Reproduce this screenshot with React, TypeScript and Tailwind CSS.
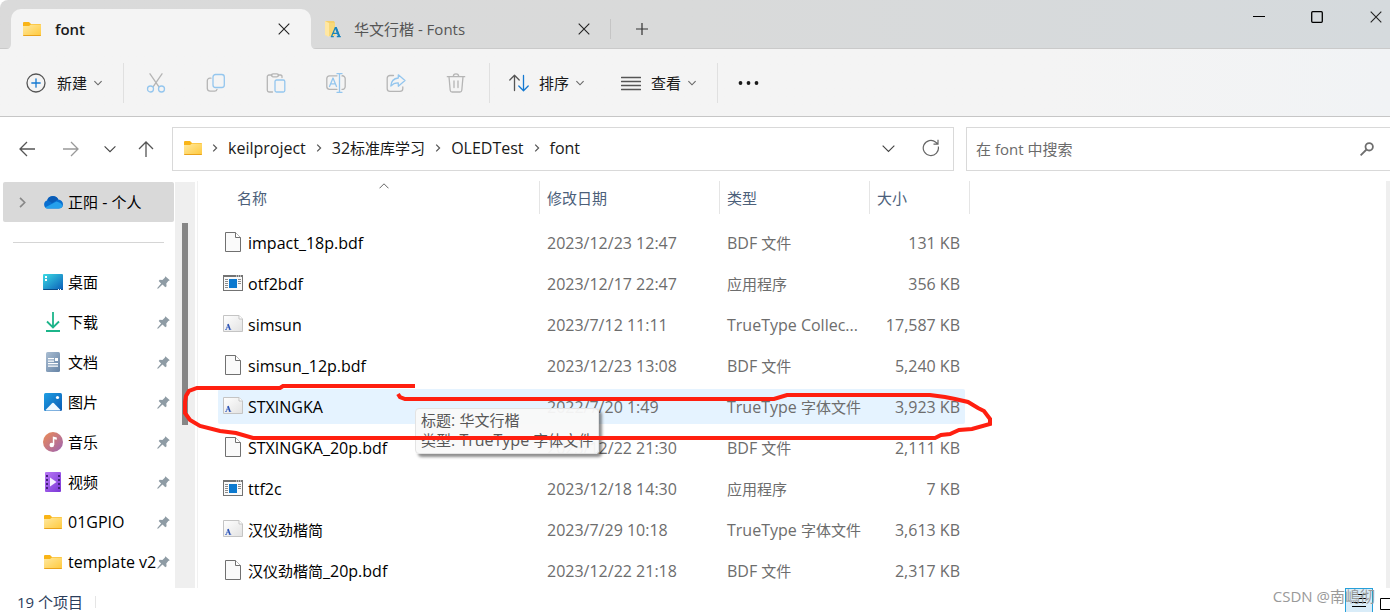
import type { ReactNode } from "react";

type FileKind = "blank" | "app" | "font";

const FILES: { name: string; kind: FileKind; date: string; type: string; size: string; hover?: boolean }[] = [
  { name: "impact_18p.bdf", kind: "blank", date: "2023/12/23 12:47", type: "BDF 文件", size: "131 KB" },
  { name: "otf2bdf", kind: "app", date: "2023/12/17 22:47", type: "应用程序", size: "356 KB" },
  { name: "simsun", kind: "font", date: "2023/7/12 11:11", type: "TrueType Collec...", size: "17,587 KB" },
  { name: "simsun_12p.bdf", kind: "blank", date: "2023/12/23 13:08", type: "BDF 文件", size: "5,240 KB" },
  { name: "STXINGKA", kind: "font", date: "2022/7/20 1:49", type: "TrueType 字体文件", size: "3,923 KB", hover: true },
  { name: "STXINGKA_20p.bdf", kind: "blank", date: "2023/12/22 21:30", type: "BDF 文件", size: "2,111 KB" },
  { name: "ttf2c", kind: "app", date: "2023/12/18 14:30", type: "应用程序", size: "7 KB" },
  { name: "汉仪劲楷简", kind: "font", date: "2023/7/29 10:18", type: "TrueType 字体文件", size: "3,613 KB" },
  { name: "汉仪劲楷简_20p.bdf", kind: "blank", date: "2023/12/22 21:18", type: "BDF 文件", size: "2,317 KB" },
];

const CRUMBS = ["keilproject", "32标准库学习", "OLEDTest", "font"];

// Latin runs are set one pixel larger than the Chinese ones
function Label({ text }: { text: string }) {
  const runs = text.split(/([\u4e00-\u9fff]+)/).filter(Boolean);
  return (
    <span className="text-[16px] leading-5 whitespace-nowrap">
      {runs.map((run, i) =>
        /[\u4e00-\u9fff]/.test(run) ? (
          <span key={i} className="text-[15px]">
            {run}
          </span>
        ) : (
          run
        ),
      )}
    </span>
  );
}

function FolderIcon() {
  return (
    <svg width="18" height="14" viewBox="0 0 18 14" className="shrink-0">
      <defs>
        <linearGradient id="folder" x1="0" y1="0" x2="1" y2="1">
          <stop offset="0" stopColor="#ffe9a0" />
          <stop offset="1" stopColor="#ffc93c" />
        </linearGradient>
      </defs>
      <path d="M0 1a1 1 0 0 1 1-1h5l2 2h9a1 1 0 0 1 1 1v3H0z" fill="#f9b416" />
      <path d="M0 4h6l2-1.5h10V13a1 1 0 0 1-1 1H1a1 1 0 0 1-1-1z" fill="url(#folder)" />
      <path d="M0 13h18a1 1 0 0 1-1 1H1a1 1 0 0 1-1-1z" fill="#e9a21b" />
    </svg>
  );
}

function FontsFolderIcon() {
  return (
    <svg width="18" height="18" viewBox="0 0 18 18" className="shrink-0">
      <path d="M1 1h9l1 2v13H3l-2-2z" fill="#f5d06a" />
      <path d="M1 1l4 2v14l-4-2z" fill="#ffe7a3" />
      <path d="M5 3h6v13H5z" fill="#f8d878" />
      <path
        d="M7.500 16.500l3.800-9h1l3.300 9M9 13.300h5M6.800 16.600h3M12.800 16.600h4"
        fill="none"
        stroke="#1a84bd"
        strokeWidth="1.200"
      />
      <path d="M11.600 7.500l3.500 9" stroke="#1a84bd" strokeWidth="2" />
    </svg>
  );
}

function CloseIcon() {
  return (
    <svg width="12" height="12" viewBox="0 0 12 12" fill="none" stroke="#222" strokeWidth="1.1">
      <path d="M.7.7l10.6 10.6M11.3.7L.7 11.3" />
    </svg>
  );
}

function ChevronDown({ size = 8, color = "#666" }: { size?: number; color?: string }) {
  return (
    <svg width={size} height={size} viewBox="0 0 8 8" fill="none" stroke={color} strokeWidth={9 / size} className="shrink-0">
      <path d="M.4 2.2L4 5.8l3.6-3.6" />
    </svg>
  );
}

function ChevronRight({ size = 8, color = "#555" }: { size?: number; color?: string }) {
  return (
    <svg width={size} height={size} viewBox="0 0 8 8" fill="none" stroke={color} strokeWidth="1.2" className="shrink-0">
      <path d="M2.2.6L5.6 4 2.2 7.4" />
    </svg>
  );
}

function ToolIcon({ children }: { children: ReactNode }) {
  return (
    <svg
      width="20"
      height="20"
      viewBox="0 0 20 20"
      fill="none"
      strokeWidth="1.3"
      strokeLinecap="round"
      strokeLinejoin="round"
      className="shrink-0"
    >
      {children}
    </svg>
  );
}

const ACTIONS = [
  {
    label: "剪切",
    icon: (
      <ToolIcon>
        <path d="M4 .8l8.6 12.6M16 .8L7.4 13.4" stroke="#b5b5b5" />
        <circle cx="4.500" cy="16" r="3" stroke="#94c6ee" />
        <circle cx="15.500" cy="16" r="3" stroke="#94c6ee" />
      </ToolIcon>
    ),
  },
  {
    label: "复制",
    icon: (
      <ToolIcon>
        <path d="M5 5.200H4A2.500 2.500 0 0 0 1.300 7.700V15.500A3 3 0 0 0 4.200 18.200H8.500A2.500 2.500 0 0 0 11 16.300" stroke="#b5b5b5" />
        <rect x="7" y="1.500" width="11.300" height="13" rx="2.500" stroke="#94c6ee" />
      </ToolIcon>
    ),
  },
  {
    label: "粘贴",
    icon: (
      <ToolIcon>
        <path d="M6 2H3A1.800 1.800 0 0 0 1.300 4V17.300A1.800 1.800 0 0 0 3 19H6.500M12 2h2.500a1.500 1.500 0 0 1 1.500 1.800V4.500" stroke="#b5b5b5" />
        <rect x="5.500" y=".8" width="7" height="3" rx="1.500" stroke="#b5b5b5" />
        <rect x="9" y="7" width="9.800" height="12" rx="1.500" stroke="#94c6ee" />
      </ToolIcon>
    ),
  },
  {
    label: "重命名",
    icon: (
      <ToolIcon>
        <path d="M11 2.800H3.500A2.800 2.800 0 0 0 .8 5.500V13.500A2.800 2.800 0 0 0 3.500 16.300H11M16 2.800A2.800 2.800 0 0 1 19.200 5.500V13.500A2.800 2.800 0 0 1 16 16.300" stroke="#b5b5b5" />
        <path d="M3.500 13.500L7 5l3.500 8.500M4.800 10.800h4.400M11 .7h5M11 19.300h5M13.500 .7v18.600" stroke="#94c6ee" />
      </ToolIcon>
    ),
  },
  {
    label: "共享",
    icon: (
      <ToolIcon>
        <path d="M7.500 2.500H4A2.800 2.800 0 0 0 1.200 5.300V15.700A2.800 2.800 0 0 0 4 18.400H14A2.800 2.800 0 0 0 16.800 15.700V14" stroke="#b5b5b5" />
        <path d="M12.300 1.800L19 7.500l-6.700 5.700V9.800C9 9.600 6.800 10.800 4.800 13c.3-4.500 2.800-7.500 7.500-8z" stroke="#94c6ee" />
      </ToolIcon>
    ),
  },
  {
    label: "删除",
    icon: (
      <ToolIcon>
        <path d="M1.300 3.700H18.700M3 3.700l1.200 13.500A2 2 0 0 0 6.200 19h7.600a2 2 0 0 0 2-1.800L17 3.700M7.300 3.500a2.700 2.700 0 0 1 5.400 0M8 8v6.500M12 8v6.500" stroke="#b5b5b5" />
      </ToolIcon>
    ),
  },
];

function DesktopIcon() {
  return (
    <svg width="20" height="16" viewBox="0 0 20 16">
      <defs>
        <linearGradient id="desk" x1="0" y1="0" x2="1" y2="1">
          <stop offset="0" stopColor="#3bdbe4" />
          <stop offset="1" stopColor="#0b5cb8" />
        </linearGradient>
      </defs>
      <rect width="20" height="16" rx="1" fill="url(#desk)" />
      <path d="M0 15h20a1 1 0 0 1-1 1H1a1 1 0 0 1-1-1z" fill="#0a4a86" />
      <path d="M2 2h2v2H2zM2 5h2v2H2zM15 15h1v1h-1zM17 15h1v1h-1z" fill="#fff" />
    </svg>
  );
}

function DownloadIcon() {
  return (
    <svg width="16" height="20" viewBox="0 0 16 20" fill="none" stroke="#1cb58a" strokeWidth="1.800">
      <path d="M8 0v15M2 9.500L8 15.500l6-6M1 19h14" />
    </svg>
  );
}

function DocumentIcon() {
  return (
    <svg width="14" height="20" viewBox="0 0 14 20">
      <defs>
        <linearGradient id="doc" x1="0" y1="0" x2="1" y2="1">
          <stop offset="0" stopColor="#a9bdd2" />
          <stop offset="1" stopColor="#6583a5" />
        </linearGradient>
      </defs>
      <rect width="14" height="20" rx="1.500" fill="url(#doc)" />
      <path d="M2 6h6v1.200H2zM2 8.500h6v1.200H2zM9 6h3v3H9zM2 11h10v1.200H2zM2 13.500h10v1.200H2z" fill="#fff" />
    </svg>
  );
}

function PictureIcon() {
  return (
    <svg width="18" height="18" viewBox="0 0 18 18">
      <defs>
        <linearGradient id="pic" x1="0" y1="0" x2="1" y2="1">
          <stop offset="0" stopColor="#1f9fe4" />
          <stop offset="1" stopColor="#0a5ab3" />
        </linearGradient>
      </defs>
      <rect width="18" height="18" rx="1.500" fill="url(#pic)" />
      <path d="M1.500 17l6.300-6.600q1.200-1.200 2.400 0L16.500 17q-.5.500-1 .500h-13q-.5 0-1-.5z" fill="#eff8ff" />
      <circle cx="13.500" cy="4.500" r="1.600" fill="#fff" />
    </svg>
  );
}

function MusicIcon() {
  return (
    <svg width="20" height="20" viewBox="0 0 20 20">
      <defs>
        <linearGradient id="mus" x1="0" y1="0" x2="1" y2="1">
          <stop offset="0" stopColor="#ee8c52" />
          <stop offset="1" stopColor="#9c63b5" />
        </linearGradient>
      </defs>
      <circle cx="10" cy="10" r="10" fill="url(#mus)" />
      <circle cx="8.800" cy="13" r="2.300" fill="#fff" />
      <path d="M9.800 4.500l4 1v2.300l-2.500-.6V13H9.800z" fill="#fff" />
    </svg>
  );
}

function VideoIcon() {
  return (
    <svg width="16" height="20" viewBox="0 0 16 20">
      <defs>
        <linearGradient id="vid" x1="0" y1="0" x2="1" y2="1">
          <stop offset="0" stopColor="#b877f5" />
          <stop offset="1" stopColor="#7a36d6" />
        </linearGradient>
      </defs>
      <rect width="16" height="20" rx="1" fill="url(#vid)" />
      <path
        d="M1 3h2v2H1zM1 7h2v2H1zM1 11h2v2H1zM1 15h2v2H1zM13 3h2v2h-2zM13 7h2v2h-2zM13 11h2v2h-2zM13 15h2v2h-2z"
        fill="#43207c"
      />
      <path d="M5 5.500l6.500 4.500L5 14.500z" fill="#f5efff" />
    </svg>
  );
}

function PinIcon() {
  return (
    <svg width="13" height="13" viewBox="0 0 13 13" className="shrink-0">
      <path d="M8.300.3l4.500 4-1.500.8-2 2.500.3 2.600-1.300 1-2.800-2.600L1 12.700l-.8-.2.3-.8 3.600-4.200L1.700 5l1-1.200 2.700.2 2.400-2.300z" fill="#8e9ba4" />
    </svg>
  );
}

function CloudIcon() {
  return (
    <svg width="20" height="14" viewBox="0 0 20 14">
      <path d="M4 5.500A6 6 0 0 1 15.300 4.500 4.800 4.800 0 0 1 20 9.300 4.500 4.500 0 0 1 15.500 13.600H4.500A4.200 4.200 0 0 1 4 5.500z" fill="#0a6fd0" />
      <path d="M4.500 5A6 6 0 0 1 15.300 4.500L9 8z" fill="#0a5bb5" />
      <path d="M2 12.500L13.500 6.500Q19.500 8 19.500 11.500A4.500 4.500 0 0 1 15.500 13.600H4.500q-1.500 0-2.500-1.100z" fill="#25a0ec" />
    </svg>
  );
}

const SHORTCUTS = [
  { label: "桌面", icon: <DesktopIcon /> },
  { label: "下载", icon: <DownloadIcon /> },
  { label: "文档", icon: <DocumentIcon /> },
  { label: "图片", icon: <PictureIcon /> },
  { label: "音乐", icon: <MusicIcon /> },
  { label: "视频", icon: <VideoIcon /> },
  { label: "01GPIO", icon: <FolderIcon /> },
  { label: "template v2", icon: <FolderIcon /> },
];

function FileIcon({ kind }: { kind: FileKind }) {
  if (kind === "app") {
    return (
      <svg width="20" height="20" viewBox="0 0 20 20" className="mb-0.5 shrink-0">
        <rect x=".5" y="2.500" width="19" height="15" fill="#fafafa" stroke="#737373" />
        <path d="M0 2h20v2H0z" fill="#737373" />
        <path d="M13 2.500h1v1h-1zM15 2.500h1v1h-1zM17 2.500h1v1h-1z" fill="#fff" />
        <path d="M2 6.500h3M2 8.500h3M2 10.500h3M2 12.500h3M2 14.500h3M15 6.500h3M15 8.500h3M15 10.500h3" stroke="#8c8c8c" />
        <path d="M6 6h8v9H6z" fill="#0c79cf" />
      </svg>
    );
  }
  if (kind === "font") {
    return (
      <svg width="20" height="20" viewBox="0 0 20 20" className="mb-0.5 shrink-0">
        <defs>
          <linearGradient id="page" x1="0" y1="0" x2="1" y2="1">
            <stop offset="0" stopColor="#ffffff" />
            <stop offset="1" stopColor="#e2e2e2" />
          </linearGradient>
        </defs>
        <path d="M.5 1.500h15.500l3.500 3.500v12.500H.5z" fill="url(#page)" stroke="#c4c4c4" />
        <path d="M16 1.500V5h3.500" fill="#fff" stroke="#c4c4c4" />
        <path d="M3 15.500l2-5M3.600 13.700h3M2 15.500h2M5.800 15.500h2.500" fill="none" stroke="#5a7bcb" strokeWidth=".8" />
        <path d="M5 10l2 5.500" stroke="#2c52b3" strokeWidth="1.500" />
      </svg>
    );
  }
  return (
    <svg width="20" height="20" viewBox="0 0 20 20" className="mb-0.5 shrink-0">
      <path d="M2.500 .5h10l5 5v14h-15z" fill="#fafafa" stroke="#707070" />
      <path d="M12.500 .5v5h5" fill="#fff" stroke="#707070" />
    </svg>
  );
}

function TitleBar() {
  return (
    <header className="flex h-[49px] shrink-0 items-end rounded-tl-lg border-b border-[#cacaca] bg-linear-to-r from-[#dadada] via-[#d9dada] to-[#d5dadd]">
      <div className="relative -mb-px ml-[11px] flex h-10 w-[300px] items-center rounded-t-[10px] bg-[#f4f4f4] pr-[21px] pl-3">
        <svg width="5" height="5" className="absolute bottom-0 -left-[5px]" viewBox="0 0 5 5">
          <path d="M5 0v5H0q5 0 5-5z" fill="#f4f4f4" />
        </svg>
        <svg width="5" height="5" className="absolute -right-[5px] bottom-0" viewBox="0 0 5 5">
          <path d="M0 0v5h5Q0 5 0 0z" fill="#f4f4f4" />
        </svg>
        <FolderIcon />
        <span className="ml-3.5 flex-1 font-semibold text-[#1b1b1b]">font</span>
        <button aria-label="关闭标签页">
          <CloseIcon />
        </button>
      </div>
      <div className="flex h-[39px] w-[299px] items-center pr-5 pl-[13px] text-[#555]">
        <FontsFolderIcon />
        <span className="ml-3 flex-1">华文行楷 - Fonts</span>
        <button aria-label="关闭标签页">
          <CloseIcon />
        </button>
      </div>
      <div className="flex h-[39px] items-center">
        <div className="h-5 w-px bg-[#c5c5c5]" />
        <button aria-label="新建标签页" className="ml-[25px]">
          <svg width="12" height="12" viewBox="0 0 12 12" stroke="#333" strokeWidth="1.200">
            <path d="M6 0v12M0 6h12" />
          </svg>
        </button>
      </div>
      <div className="ml-auto flex h-[34px] self-start">
        <button aria-label="最小化" className="grid w-[58px] place-items-center">
          <svg width="12" height="12" stroke="#000">
            <path d="M0 5.500h12" />
          </svg>
        </button>
        <button aria-label="最大化" className="grid w-[58px] place-items-center">
          <svg width="12" height="12" fill="none" stroke="#000" strokeWidth="1.300">
            <rect x=".7" y=".7" width="10.600" height="10.600" rx="1" />
          </svg>
        </button>
        <button aria-label="关闭" className="flex w-11 items-center pl-6">
          <CloseIcon />
        </button>
      </div>
    </header>
  );
}

function Toolbar() {
  return (
    <div className="flex h-[68px] shrink-0 items-center border-b border-[#c6c6c6] bg-linear-to-r from-[#f4f4f4] from-75% to-[#f1f3f5] text-[#191919]">
      <button className="flex items-center pr-[21px] pl-[26px]">
        <ToolIcon>
          <circle cx="10" cy="10" r="9" stroke="#555" />
          <path d="M10 5.800v8.400M5.800 10h8.400" stroke="#1479d1" />
        </ToolIcon>
        <span className="mr-[7px] ml-[11px]">新建</span>
        <ChevronDown />
      </button>
      <div className="mr-0.5 h-10 w-px bg-[#e0e0e0]" />
      {ACTIONS.map((a) => (
        <button key={a.label} aria-label={a.label} disabled className="grid h-10 w-[60px] place-items-center">
          {a.icon}
        </button>
      ))}
      <div className="ml-[3px] h-10 w-px bg-[#e0e0e0]" />
      <button className="flex items-center pl-[19px]">
        <ToolIcon>
          <path d="M5.500 17.500V2.500M.8 7l4.700-4.700L10.200 7" stroke="#555" />
          <path d="M14.500 2.500v15M9.800 13l4.700 4.700 4.700-4.700" stroke="#1479d1" />
        </ToolIcon>
        <span className="mr-[7px] ml-2.5">排序</span>
        <ChevronDown />
      </button>
      <button className="flex items-center pr-[21px] pl-[37px]">
        <ToolIcon>
          <path d="M.5 4.500h19M.5 8.500h19M.5 12.500h19M.5 16.500h19" stroke="#555" />
        </ToolIcon>
        <span className="mr-[7px] ml-2.5">查看</span>
        <ChevronDown />
      </button>
      <div className="h-10 w-px bg-[#e0e0e0]" />
      <button aria-label="更多" className="ml-5">
        <svg width="21" height="4" viewBox="0 0 21 4" fill="#1b1b1b">
          <circle cx="2.500" cy="2" r="1.900" />
          <circle cx="10.500" cy="2" r="1.900" />
          <circle cx="18.500" cy="2" r="1.900" />
        </svg>
      </button>
    </div>
  );
}

function ArrowIcon({ d, color = "#555" }: { d: string; color?: string }) {
  return (
    <svg width="16" height="16" viewBox="0 0 16 16" fill="none" stroke={color} strokeWidth="1.300">
      <path d={d} />
    </svg>
  );
}

function AddressRow() {
  return (
    <div className="flex h-16 shrink-0 items-center pl-[5px]">
      <button aria-label="后退" className="grid h-10 w-11 place-items-center">
        <ArrowIcon d="M16 8H1M8 1L1 8l7 7" />
      </button>
      <button aria-label="前进" className="grid h-10 w-11 place-items-center">
        <ArrowIcon d="M0 8h15M8 1l7 7-7 7" color="#999" />
      </button>
      <button aria-label="最近的位置" className="grid h-10 w-[33px] place-items-center">
        <ChevronDown size={12} color="#444" />
      </button>
      <button aria-label="向上" className="grid h-10 w-[39px] place-items-center">
        <ArrowIcon d="M8 16V1M1 8l7-7 7 7" />
      </button>
      <nav className="ml-[7px] flex h-11 flex-[769] items-center border border-[#d9d9d9] pb-0.5 pl-[11px] text-[#191919]">
        <FolderIcon />
        {CRUMBS.map((c) => (
          <div key={c} className="flex items-center">
            <span className="grid w-[26px] place-items-center">
              <ChevronRight />
            </span>
            <a href="#">
              <Label text={c} />
            </a>
          </div>
        ))}
        <button aria-label="展开" className="mr-[27px] ml-auto">
          <ChevronDown size={13} color="#444" />
        </button>
        <button aria-label="刷新" className="mr-[13px]">
          <svg width="18" height="18" viewBox="0 0 18 18" fill="none" stroke="#666" strokeWidth="1.200">
            <path d="M16.300 7.500A7.600 7.600 0 1 1 13.800 3.200L16 5M16 .8V5.200h-4.500" />
          </svg>
        </button>
      </nav>
      <label className="ml-3 flex h-11 flex-[398] items-center border border-r-0 border-[#d9d9d9] pr-4 pl-[9px]">
        <input aria-label="搜索" placeholder="在 font 中搜索" className="min-w-0 flex-1 outline-none placeholder:text-[#6b6b6b]" />
        <svg width="14" height="14" viewBox="0 0 14 14" fill="none" stroke="#6e6e6e" strokeWidth="1.800">
          <circle cx="9.200" cy="4.800" r="3.700" />
          <path d="M6.500 7.500L.6 13.400" />
        </svg>
      </label>
    </div>
  );
}

function Sidebar() {
  return (
    <aside className="flex w-[198px] shrink-0 border-r border-[#f1f1f1] pt-px">
      <div className="w-[175px] pl-[3px] text-black">
        <button className="flex h-10 w-[171px] items-center rounded-xs bg-[#d9d9d9] pl-3.5">
          <ChevronRight size={11} color="#888" />
          <span className="ml-[15px] grid w-5 place-items-center">
            <CloudIcon />
          </span>
          <span className="ml-[5px]">
            <Label text="正阳 - 个人" />
          </span>
        </button>
        <div className="flex h-10 items-center pr-[11px] pl-2.5">
          <hr className="w-full border-[#d5d5d5]" />
        </div>
        {SHORTCUTS.map((s) => (
          <a key={s.label} href="#" className="flex h-10 items-center pr-[5px] pl-10">
            <span className="grid w-5 shrink-0 place-items-center">{s.icon}</span>
            <span className="ml-[5px] min-w-0 flex-1">
              <Label text={s.label} />
            </span>
            <PinIcon />
          </a>
        ))}
      </div>
      <div className="w-5 bg-[#efefef] pt-[41px]">
        <div className="mx-auto h-[202px] w-1.5 bg-[#868686]" />
      </div>
    </aside>
  );
}

function FileTable() {
  return (
    <table className="w-[752px] table-fixed border-collapse text-left">
      <colgroup>
        <col className="w-[322px]" />
        <col className="w-[180px]" />
        <col className="w-[150px]" />
        <col className="w-[95px]" />
        <col className="w-[5px]" />
      </colgroup>
      <thead className="text-[#4c607a]">
        <tr className="h-[42px] align-top">
          <th className="relative p-0 font-normal">
            <div className="flex h-[33px] items-center border-r border-[#e5e5e5] pl-[19px]">名称</div>
            <svg width="10" height="6" viewBox="0 0 10 6" fill="none" stroke="#666" className="absolute top-0.5 left-[161px]">
              <path d="M.5 5.300L5 .8l4.500 4.500" />
            </svg>
          </th>
          <th className="p-0 font-normal">
            <div className="flex h-[33px] items-center border-r border-[#e5e5e5] pl-[7px]">修改日期</div>
          </th>
          <th className="p-0 font-normal">
            <div className="flex h-[33px] items-center border-r border-[#e5e5e5] pl-[7px]">类型</div>
          </th>
          <th colSpan={2} className="p-0 font-normal">
            <div className="flex h-[33px] items-center border-r border-[#e5e5e5] pl-[7px]">大小</div>
          </th>
        </tr>
      </thead>
      <tbody className="text-[#6d6d6d]">
        {FILES.map((f) => {
          const bg = f.hover ? "bg-[#e5f3ff]" : "";
          return (
            <tr key={f.name}>
              <td className="px-0 pt-0.5 pb-1">
                <div className={`flex h-[35px] items-center gap-[5px] rounded-l-xs pl-[5px] text-black ${bg}`}>
                  <FileIcon kind={f.kind} />
                  <Label text={f.name} />
                </div>
              </td>
              <td className="px-0 pt-0.5 pb-1">
                <div className={`flex h-[35px] items-center pl-[7px] ${bg}`}>
                  <Label text={f.date} />
                </div>
              </td>
              <td className="px-0 pt-0.5 pb-1">
                <div className={`flex h-[35px] items-center pl-[7px] ${bg}`}>
                  <Label text={f.type} />
                </div>
              </td>
              <td className="px-0 pt-0.5 pb-1">
                <div className={`flex h-[35px] items-center justify-end rounded-r-xs pr-[5px] ${bg}`}>
                  <Label text={f.size} />
                </div>
              </td>
              <td />
            </tr>
          );
        })}
      </tbody>
    </table>
  );
}

export default function App() {
  return (
    <div className="relative flex h-screen flex-col overflow-hidden bg-white font-['Open_Sans','Noto_Sans_CJK_SC',sans-serif] text-[15px] leading-5">
      <TitleBar />
      <Toolbar />
      <AddressRow />
      <main className="flex min-h-0 flex-1 overflow-hidden">
        <Sidebar />
        <section className="flex-1 pl-5">
          <FileTable />
        </section>
        <div className="w-1 bg-[#efefef]" />
      </main>
      <footer className="flex h-6 shrink-0 overflow-hidden pl-[17px] leading-7 text-[#2b3d5b]">
        <span>19 个项目</span>
        <div className="mt-2 ml-3 h-3 w-px bg-[#e5e5e5]" />
        <button aria-label="详细信息" className="ml-auto h-7 w-7 border border-[#26a0da] bg-[#d9ecf8] pl-1.5">
          <svg width="14" height="18" stroke="#000">
            <path d="M0 1.500h14M0 5.500h14M0 9.500h14M0 13.500h14" />
          </svg>
        </button>
        <button aria-label="大缩略图" className="ml-[7px] h-7 w-2.5 overflow-hidden pt-[7px]">
          <svg width="20" height="16" fill="none" stroke="#000" className="max-w-none">
            <path d="M.5 .5h18v11H.5zM0 14.500h20" />
          </svg>
        </button>
      </footer>

      <div
        role="tooltip"
        className="absolute top-[408px] left-[415px] rounded-sm border border-[#e3e3e3] bg-[#f9f9f9]/95 px-[5px] pt-px pb-[3px] text-[#575757] shadow-[3px_3px_3px_rgba(0,0,0,0.45)]"
      >
        <p>
          <Label text="标题: 华文行楷" />
        </p>
        <p>
          <Label text="类型: TrueType 字体文件" />
        </p>
      </div>

      {/* hand-drawn marker round the hovered row */}
      <svg width="1390" height="612" className="pointer-events-none absolute top-0 left-0" fill="none">
        <path
          d="M415 386H283L280 388H197L189 391L186 396L185 402V413L190 420L200 426L220 431L236 433L253 438H935L941 435L950 434L959 430L972 429L990 424V419L984 411L978 408L968 402L955 399L945 397L930 395H787L774 399H405L400 397L398 394"
          stroke="#ff1f10"
          strokeWidth="4"
        />
      </svg>
      <span className="pointer-events-none absolute right-[15px] bottom-1.5 text-[15px] text-[#999]">CSDN @南嶋彻</span>
    </div>
  );
}
